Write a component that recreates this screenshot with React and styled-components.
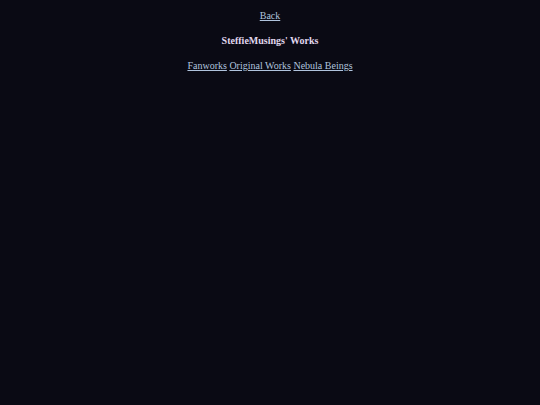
import React from "react";
import styled, { createGlobalStyle } from "styled-components";

const Global = createGlobalStyle`
  html, body { background: #0a0a14; }
  body { margin: 0; font-family: "Liberation Serif", "Times New Roman", serif; font-size: 10px; line-height: 13px; }
`;

const Page = styled.div`
  text-align: center;
  padding-top: 9px;
`;

const Para = styled.p`
  margin: 0 0 12px;
`;

const Link = styled.a`
  color: #b0c4de;
  text-decoration: underline;
`;

const Title = styled.p`
  margin: 0 0 12px;
  font-weight: bold;
  color: #e0d8ef;
`;

export default function App() {
  return (
    <Page>
      <Global />
      <Para><Link href="#">Back</Link></Para>
      <Title>SteffieMusings' Works</Title>
      <Para>
        <Link href="#">Fanworks</Link> <Link href="#">Original Works</Link> <Link href="#">Nebula Beings</Link>
      </Para>
    </Page>
  );
}
